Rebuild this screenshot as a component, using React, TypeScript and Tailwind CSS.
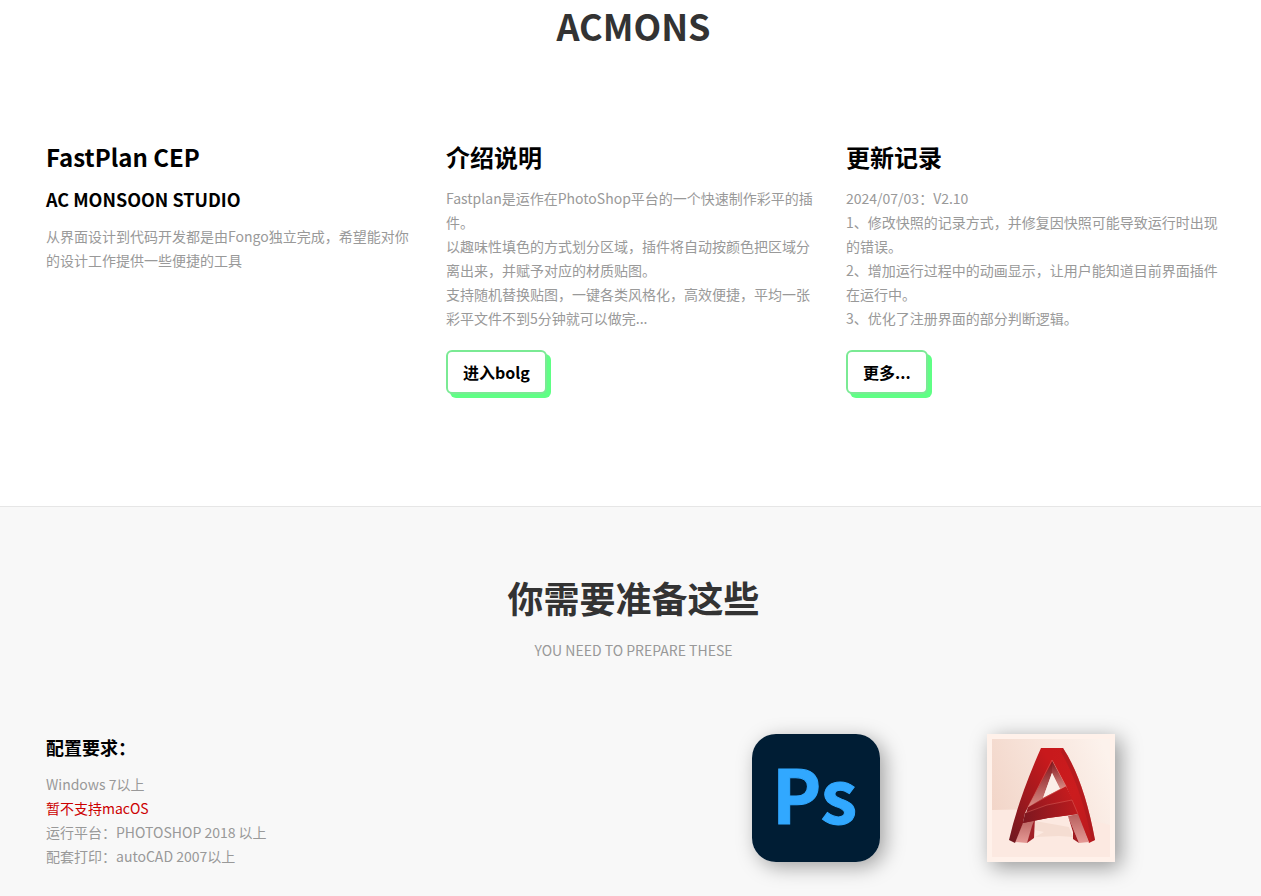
import React from 'react';

const updates = [
  '2024/07/03：V2.10',
  '1、修改快照的记录方式，并修复因快照可能导致运行时出现的错误。',
  '2、增加运行过程中的动画显示，让用户能知道目前界面插件在运行中。',
  '3、优化了注册界面的部分判断逻辑。',
];

const intro = [
  'Fastplan是运作在PhotoShop平台的一个快速制作彩平的插件。',
  '以趣味性填色的方式划分区域，插件将自动按颜色把区域分离出来，并赋予对应的材质贴图。',
  '支持随机替换贴图，一键各类风格化，高效便捷，平均一张彩平文件不到5分钟就可以做完...',
];

function ActionButton({ children }: { children: React.ReactNode }) {
  return (
    <button
      type="button"
      className="mt-5 h-11 rounded-md border-2 border-[#7aea94] bg-white px-[15px] text-base font-bold text-black shadow-[4px_4px_0_#5fff85]"
    >
      {children}
    </button>
  );
}

function PhotoshopIcon() {
  return (
    <svg viewBox="0 0 128 128" role="img" aria-label="Photoshop" className="size-32 rounded-3xl shadow-[5px_5px_20px_rgba(0,0,0,0.35)]">
      <rect width="128" height="128" fill="#001d34" />
      <text x="20" y="90" fontSize="74" fontWeight="700" fill="#31a8ff" stroke="#31a8ff" strokeWidth="1">
        Ps
      </text>
    </svg>
  );
}

function AutocadIcon() {
  return (
    <svg viewBox="0 0 128 128" role="img" aria-label="AutoCAD" className="size-32 shadow-[5px_5px_20px_rgba(0,0,0,0.4)]">
      <defs>
        <linearGradient id="wall" x1="0" y1="0.6" x2="1" y2="0.2">
          <stop offset="0" stopColor="#f2d5c8" />
          <stop offset="1" stopColor="#fcf2ec" />
        </linearGradient>
        <linearGradient id="front" x1="0" y1="1" x2="0.75" y2="0">
          <stop offset="0" stopColor="#6d1820" />
          <stop offset="0.5" stopColor="#a0191e" />
          <stop offset="1" stopColor="#c8191c" />
        </linearGradient>
        <linearGradient id="side" x1="0" y1="0" x2="1" y2="1">
          <stop offset="0" stopColor="#c8191c" />
          <stop offset="0.5" stopColor="#cb1c1e" />
          <stop offset="1" stopColor="#b81a1e" />
        </linearGradient>
        <linearGradient id="bar" x1="0" y1="0.6" x2="1" y2="0.3">
          <stop offset="0" stopColor="#8c1820" />
          <stop offset="1" stopColor="#cb1c1e" />
        </linearGradient>
        <linearGradient id="under" x1="0" y1="0" x2="1" y2="0">
          <stop offset="0" stopColor="#7d1720" />
          <stop offset="1" stopColor="#bd1b1e" />
        </linearGradient>
        <linearGradient id="inner" x1="0" y1="0" x2="0" y2="1">
          <stop offset="0" stopColor="#7a1016" />
          <stop offset="1" stopColor="#dc8c86" />
        </linearGradient>
        <linearGradient id="foot" x1="0" y1="0" x2="0" y2="1">
          <stop offset="0" stopColor="#b8605e" />
          <stop offset="1" stopColor="#e59a96" />
        </linearGradient>
      </defs>
      <rect width="128" height="128" fill="#fff1ea" />
      <rect x="5" y="5" width="118" height="118" fill="url(#wall)" />
      <path d="M5 76 L58 75 L123 91 V123 H5Z" fill="#fce9e1" />
      <path d="M48 87 L82 93 L86 103 L72 102 L48 103 L57 98 L48 96Z" fill="#f5ddd2" />
      <path d="M65 26 L41 73 L56 64 L65 39Z" fill="url(#inner)" />
      <path d="M65 26 L79 52 L73 55 L65 39Z" fill="url(#inner)" />
      <path d="M65 39 L73 55 L56 64Z" fill="#fbeee8" />
      <path d="M36 88 L48 84 L42 106 L40 109 L28 108Z" fill="url(#foot)" />
      <path d="M48 84 L47 104 L40 109 L45 92Z" fill="#a02027" />
      <path d="M54 14 H66 V26 L41 73 L38 79 L36 89 L28 109 L22 106 Q31 66 54 14Z" fill="url(#front)" />
      <path d="M65 14 H76 Q97 46 108 106 L102 109 L90 80 L85 66 L79 52 L65 26Z" fill="url(#side)" />
      <path d="M41 73 L56 64 L79 52 L87 68 L91 80 L61 84 L36 89Z" fill="url(#bar)" />
      <path d="M38 79 L60 71 L85 66 L91 80 L61 84 L36 89Z" fill="url(#under)" />
      <path d="M81 82 L91 80 L102 108 L92 109Z" fill="url(#foot)" />
      <path d="M81 82 L92 109 L86 105 L86 98Z" fill="#a01b21" />
      <path d="M76 14 Q97 46 108 106 L105 107 Q94 52 74 18Z" fill="#a3191e" opacity="0.5" />
      <path d="M79 52 L65 26 L41 73 L79 52 M38 79 L60 71 L85 66 L91 80" fill="none" stroke="#e8766c" strokeWidth="0.4" />
    </svg>
  );
}

export default function App() {
  return (
    <main className="flex min-h-screen flex-col bg-white font-['Noto_Sans_CJK_SC',sans-serif] text-sm leading-6 text-[#999999]">
      <section className="pr-10 pb-28 pl-[46px]">
        <h1 className="pt-[3px] text-center text-4xl leading-[44px] font-bold text-[#333333]">ACMONS</h1>

        <div className="mt-[92px] grid grid-cols-3 gap-x-[25px]">
          <article>
            <h2 className="text-2xl leading-9 font-bold text-black">FastPlan CEP</h2>
            <h3 className="mt-2 text-lg leading-8 font-bold text-black">AC MONSOON STUDIO</h3>
            <p className="mt-[9px]">从界面设计到代码开发都是由Fongo独立完成，希望能对你的设计工作提供一些便捷的工具</p>
          </article>

          <article>
            <h2 className="mb-[11px] text-2xl leading-9 font-bold text-black">介绍说明</h2>
            {intro.map((line) => (
              <p key={line}>{line}</p>
            ))}
            <ActionButton>进入bolg</ActionButton>
          </article>

          <article>
            <h2 className="mb-[11px] text-2xl leading-9 font-bold text-black">更新记录</h2>
            {updates.map((line) => (
              <p key={line}>{line}</p>
            ))}
            <ActionButton>更多...</ActionButton>
          </article>
        </div>
      </section>

      <section className="grow border-t border-[#e6e6e6] bg-[#f8f8f8] pr-10 pb-6 pl-[46px]">
        <h2 className="mt-[66px] text-center text-4xl leading-[48px] font-bold text-[#333333]">你需要准备这些</h2>
        <p className="mt-[17px] text-center">YOU NEED TO PREPARE THESE</p>

        <div className="mt-[72px] grid grid-cols-2 gap-x-[25px]">
          <div>
            <h3 className="mb-3 text-lg leading-[26px] font-bold text-black">配置要求：</h3>
            <p>Windows 7以上</p>
            <p className="text-[#cc0000]">暂不支持macOS</p>
            <p>运行平台：PHOTOSHOP 2018 以上</p>
            <p>配套打印：autoCAD 2007以上</p>
          </div>
          <div className="flex items-start justify-evenly">
            <PhotoshopIcon />
            <AutocadIcon />
          </div>
        </div>
      </section>
    </main>
  );
}
